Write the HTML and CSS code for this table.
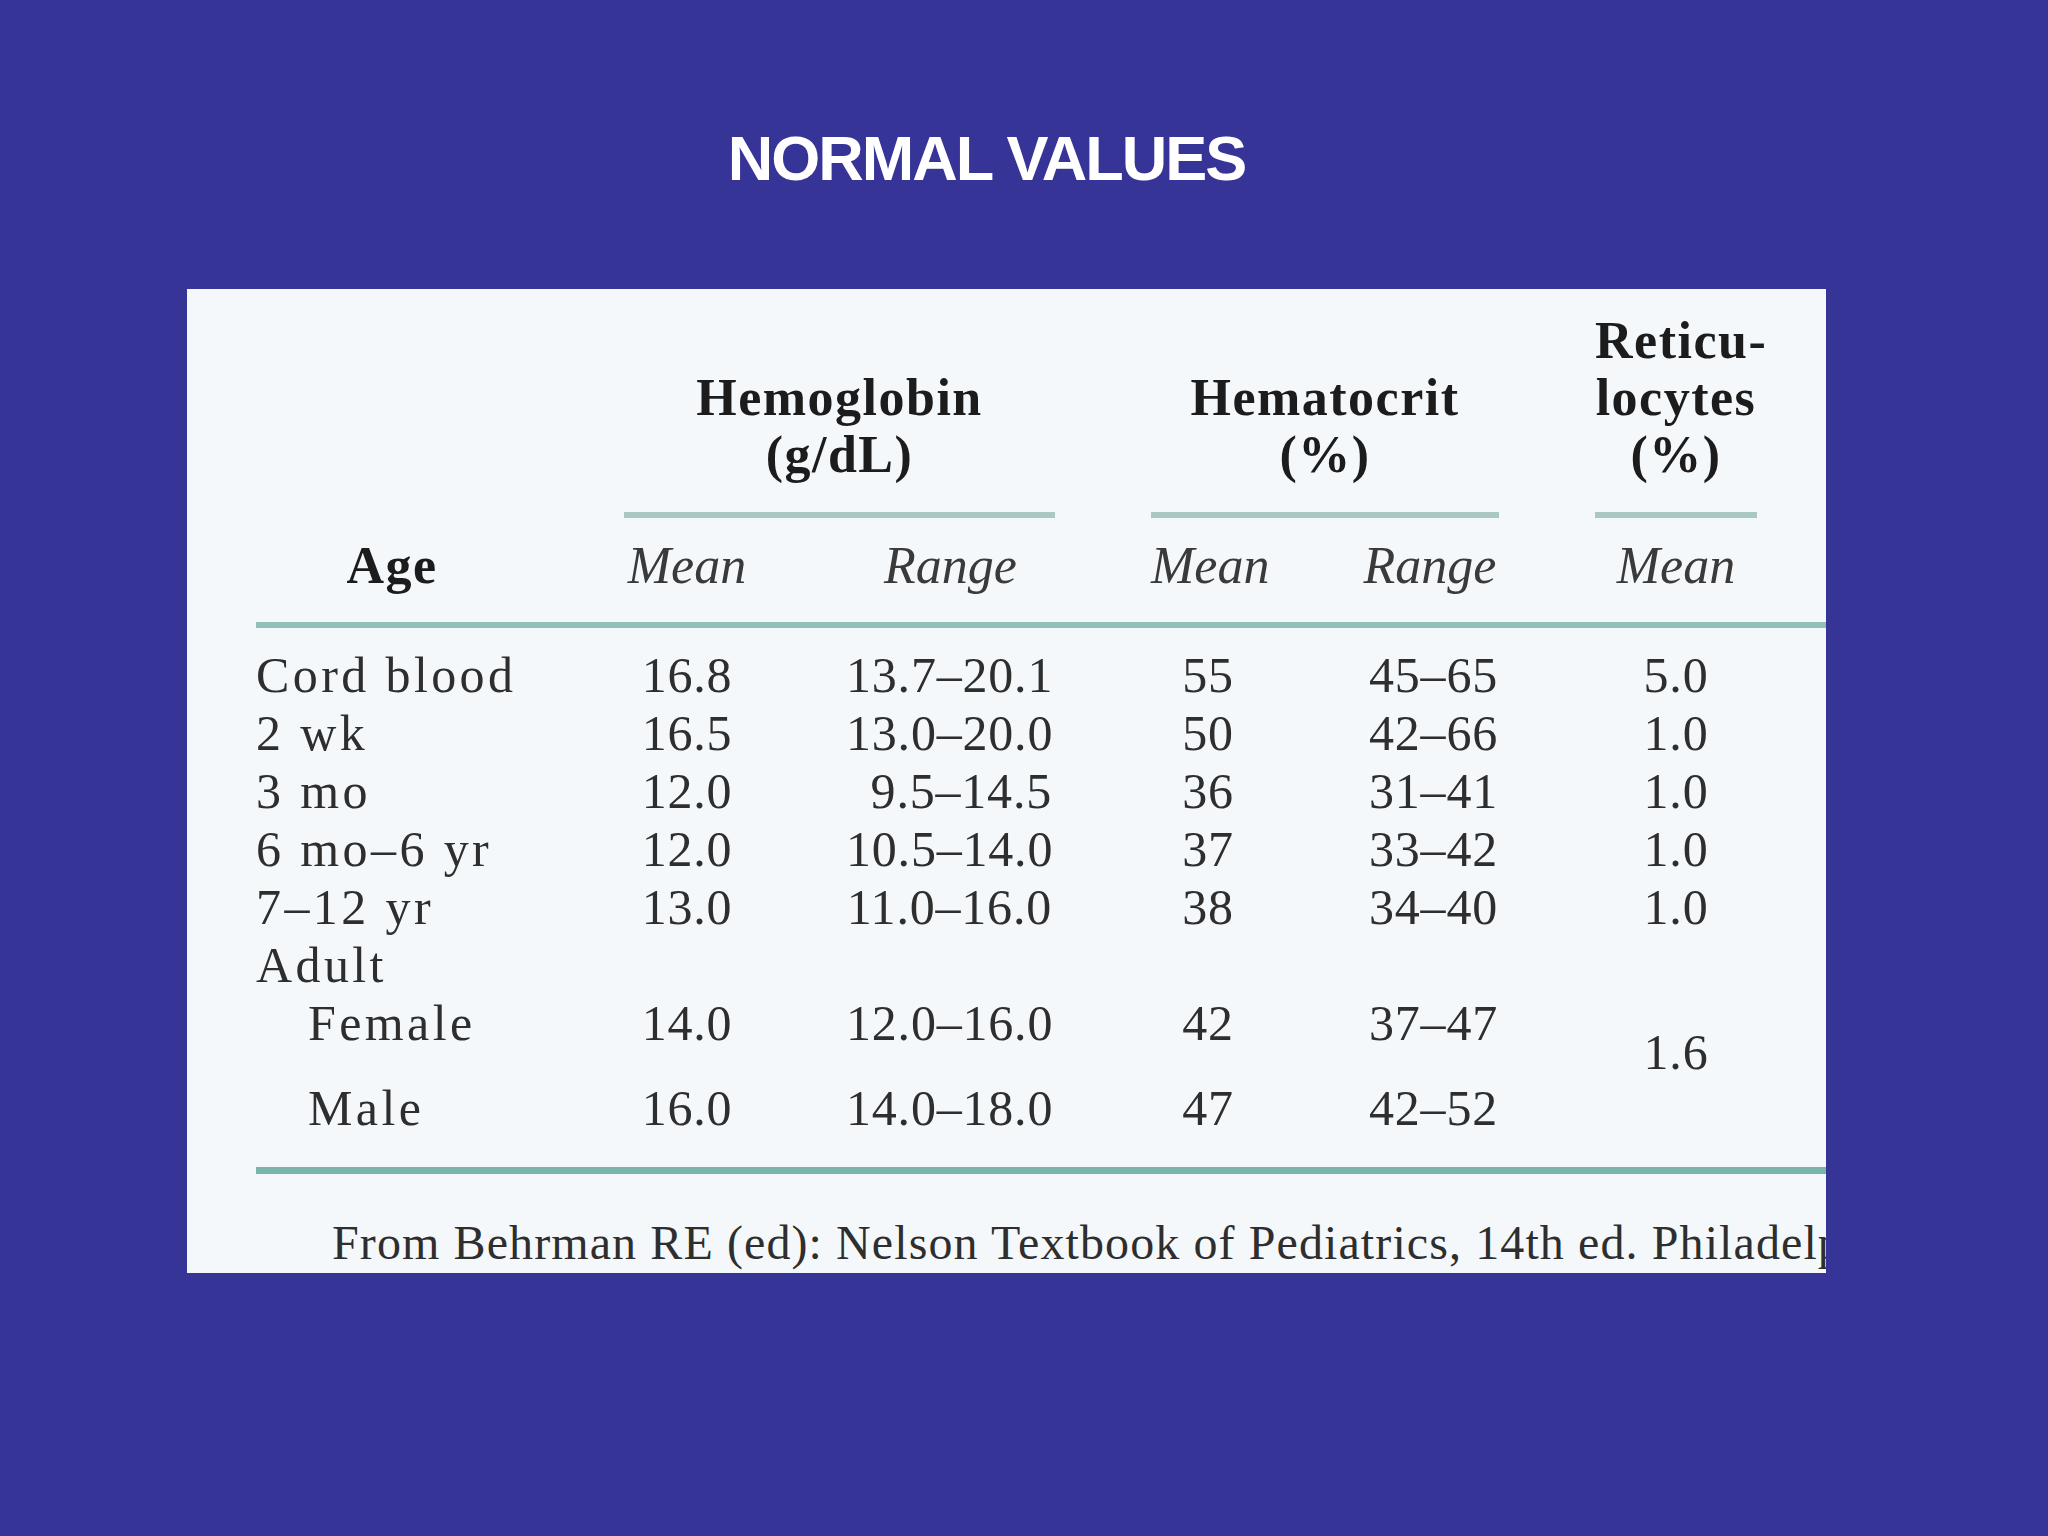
FILE: index.html
```html
<!DOCTYPE html>
<html lang="en">
<head>
<meta charset="utf-8">
<title>Normal Values</title>
<link rel="stylesheet" href="styles.css">
</head>
<body>
<div class="slide">
  <h1 class="title">NORMAL VALUES</h1>
  <div class="figure">
    <div class="tbl">
      <div class="row head">
        <div></div>
        <div class="grp span2">Hemoglobin<br>(g/dL)</div>
        <div class="grp span2">Hematocrit<br>(%)</div>
        <div class="grp">Reticu-<br>locytes<br>(%)</div>
      </div>
      <div class="row sub">
        <div class="age-h">Age</div>
        <div class="it">Mean</div>
        <div class="it">Range</div>
        <div class="it">Mean</div>
        <div class="it">Range</div>
        <div class="it">Mean</div>
      </div>
      <div class="rule thick"></div>
      <div class="body">
        <div class="row data"><div class="lbl">Cord blood</div><div class="num">16.8</div><div class="num rng">13.7–20.1</div><div class="num">55</div><div class="num rng2">45–65</div><div class="num">5.0</div></div>
        <div class="row data"><div class="lbl">2 wk</div><div class="num">16.5</div><div class="num rng">13.0–20.0</div><div class="num">50</div><div class="num rng2">42–66</div><div class="num">1.0</div></div>
        <div class="row data"><div class="lbl">3 mo</div><div class="num">12.0</div><div class="num rng">9.5–14.5</div><div class="num">36</div><div class="num rng2">31–41</div><div class="num">1.0</div></div>
        <div class="row data"><div class="lbl">6 mo–6 yr</div><div class="num">12.0</div><div class="num rng">10.5–14.0</div><div class="num">37</div><div class="num rng2">33–42</div><div class="num">1.0</div></div>
        <div class="row data"><div class="lbl">7–12 yr</div><div class="num">13.0</div><div class="num rng">11.0–16.0</div><div class="num">38</div><div class="num rng2">34–40</div><div class="num">1.0</div></div>
        <div class="row data"><div class="lbl">Adult</div></div>
        <div class="row pair">
          <div class="lbl sublbl r1">Female</div><div class="num r1">14.0</div><div class="num rng r1">12.0–16.0</div><div class="num r1">42</div><div class="num rng2 r1">37–47</div>
          <div class="num shared">1.6</div>
          <div class="lbl sublbl r3">Male</div><div class="num r3">16.0</div><div class="num rng r3">14.0–18.0</div><div class="num r3">47</div><div class="num rng2 r3">42–52</div>
        </div>
      </div>
      <div class="rule bottom"></div>
    </div>
    <p class="foot">From Behrman RE (ed): Nelson Textbook of Pediatrics, 14th ed. Philadelphia, WB Saunders, 1992</p>
  </div>
</div>
</body>
</html>
```

FILE: styles.css
```css
html, body {
  margin: 0;
  padding: 0;
}
body {
  background: #373498;
  width: 2048px;
  height: 1536px;
  overflow: hidden;
}
.slide {
  padding-top: 122px;
}
.title {
  margin: 0;
  padding-right: 75px;
  text-align: center;
  font-family: "Liberation Sans", Arial, sans-serif;
  font-weight: bold;
  font-size: 63px;
  line-height: 72px;
  letter-spacing: -2px;
  color: #ffffff;
}
.figure {
  margin: 95px 0 0 187px;
  width: 1639px;
  height: 984px;
  overflow: hidden;
  background: #f5f8fb;
  font-family: "Liberation Serif", "Times New Roman", serif;
  color: #2e2e2e;
  box-sizing: border-box;
  padding-top: 23px;
}
.tbl {
  margin-left: 69px;
  width: 1570px;
}
.row {
  display: grid;
  grid-template-columns: 272px 126px 209px 114px 138px 162px;
  column-gap: 96px;
}
.head {
  align-items: end;
}
.grp {
  font-weight: bold;
  font-size: 52px;
  line-height: 57px;
  letter-spacing: 1.5px;
  text-align: center;
  color: #1c1c1c;
  padding-bottom: 29px;
  border-bottom: 6px solid #a9c7c3;
}
.span2 {
  grid-column: span 2;
}
.sub {
  margin-top: 19px;
  font-size: 52px;
  line-height: 57px;
  text-align: center;
}
.age-h {
  font-weight: bold;
  letter-spacing: 1.5px;
  color: #1c1c1c;
}
.it {
  font-style: italic;
  color: #3a3a3a;
}
.rule {
  width: 100%;
}
.thick {
  margin-top: 28px;
  height: 6px;
  background: #8fc0b9;
}
.body {
  margin-top: 18px;
}
.data, .pair {
  font-size: 50px;
  line-height: 58px;
  grid-auto-rows: 58px;
}
.lbl {
  letter-spacing: 3.4px;
  white-space: nowrap;
}
.sublbl {
  padding-left: 52px;
}
.num {
  text-align: center;
  letter-spacing: 0.8px;
  white-space: nowrap;
}
.rng {
  text-align: right;
  padding-right: 3px;
}
.rng2 {
  text-align: right;
  padding-right: 1px;
}
.pair {
  grid-template-rows: 58px 27px 58px;
}
.r1 {
  grid-row: 1;
}
.r3 {
  grid-row: 3;
}
.shared {
  grid-column: 6;
  grid-row: 1 / 4;
  padding-top: 29px;
}
.bottom {
  margin-top: 30px;
  height: 7px;
  background: #78b6ab;
}
.foot {
  margin: 43px 0 0 145px;
  font-size: 48px;
  line-height: 52px;
  letter-spacing: 1.1px;
  white-space: nowrap;
  color: #2e2e2e;
}
```
